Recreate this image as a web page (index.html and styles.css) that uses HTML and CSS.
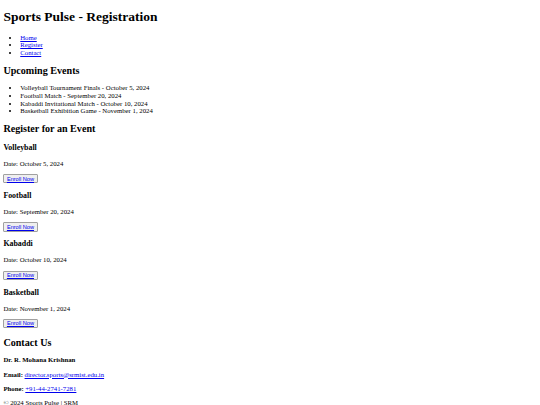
FILE: index.html
```html
<!DOCTYPE html>
<html>
<head>
<meta charset="utf-8">
<title>Sports Pulse - Registration</title>
<link rel="stylesheet" href="styles.css">
</head>
<body class="page">
<header>
<h1 class="title">Sports Pulse - Registration</h1>
<nav>
<ul class="list">
<li><a href="#">Home</a></li>
<li><a href="#">Register</a></li>
<li><a href="#">Contact</a></li>
</ul>
</nav>
</header>
<section>
<h2 class="sub">Upcoming Events</h2>
<ul class="list">
<li>Volleyball Tournament Finals - October 5, 2024</li>
<li>Football Match - September 20, 2024</li>
<li>Kabaddi Invitational Match - October 10, 2024</li>
<li>Basketball Exhibition Game - November 1, 2024</li>
</ul>
</section>
<section>
<h2 class="sub">Register for an Event</h2>
<div class="event">
<h3 class="ev-title">Volleyball</h3>
<p class="para">Date: October 5, 2024</p>
<button class="btn"><a href="#">Enroll Now</a></button>
</div>
<div class="event">
<h3 class="ev-title">Football</h3>
<p class="para">Date: September 20, 2024</p>
<button class="btn"><a href="#">Enroll Now</a></button>
</div>
<div class="event">
<h3 class="ev-title">Kabaddi</h3>
<p class="para">Date: October 10, 2024</p>
<button class="btn"><a href="#">Enroll Now</a></button>
</div>
<div class="event">
<h3 class="ev-title">Basketball</h3>
<p class="para">Date: November 1, 2024</p>
<button class="btn"><a href="#">Enroll Now</a></button>
</div>
</section>
<section>
<h2 class="sub">Contact Us</h2>
<p class="para"><strong>Dr. R. Mohana Krishnan</strong></p>
<p class="para"><strong>Email:</strong> <a href="#">director.sports@srmist.edu.in</a></p>
<p class="para"><strong>Phone:</strong> <a href="#">+91-44-2741-7281</a></p>
</section>
<footer>
<p class="para">© 2024 Sports Pulse | SRM</p>
</footer>
</body>
</html>
```
FILE: styles.css
```css
.page {
  margin: 0 3.375px 3.375px;
  font-family: "Liberation Serif", serif;
  font-size: 6.75px;
  line-height: 7.594px;
  color: #000;
  background: #fff;
}
.title {
  font-size: 13.5px;
  line-height: 15.61px;
  margin: 9.045px 0;
}
.sub {
  font-size: 10.125px;
  line-height: 11.2px;
  margin: 8.404px 0;
}
.ev-title {
  font-size: 7.8975px;
  line-height: 9.07px;
  margin: 7.8975px 0;
}
.para {
  margin: 6.75px 0;
}
.list {
  margin: 6.75px 0;
  padding-left: 16.875px;
}
a {
  color: #0000ee;
}
.btn {
  font-family: "Liberation Sans", Arial, sans-serif;
  font-size: 5.625px;
  line-height: 6.33px;
  padding: 0.42px 2.53px;
  border: 0.84px solid #a0a0a0;
  border-radius: 1px;
  background: #efefef;
  margin: 0;
}
```
